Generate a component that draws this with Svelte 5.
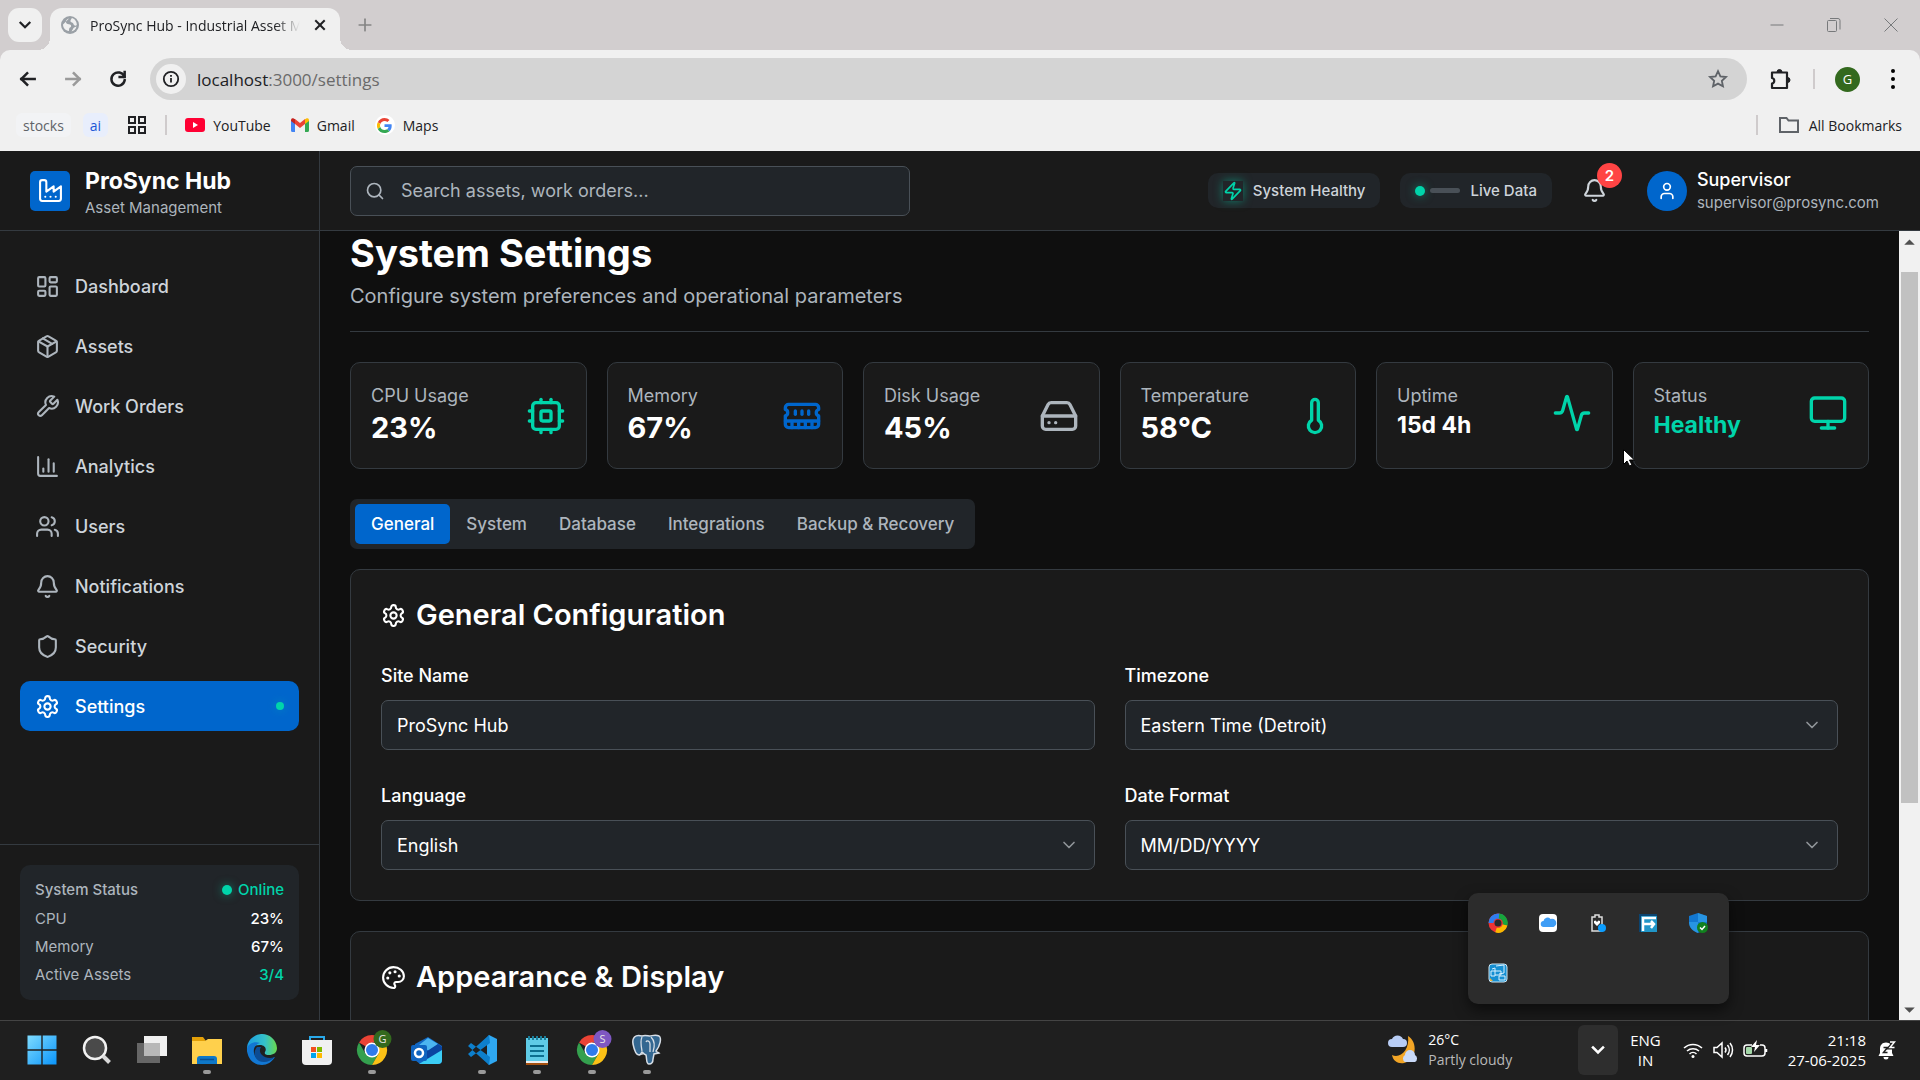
<script>
  const icons = {
    factory: ['M2 20a2 2 0 0 0 2 2h16a2 2 0 0 0 2-2V8l-7 5V8l-7 5V4a2 2 0 0 0-2-2H4a2 2 0 0 0-2 2Z', 'M17 18h.01', 'M12 18h.01', 'M7 18h.01'],
    dashboard: ['M4 3h5a1 1 0 0 1 1 1v7a1 1 0 0 1-1 1H4a1 1 0 0 1-1-1V4a1 1 0 0 1 1-1z', 'M15 3h5a1 1 0 0 1 1 1v3a1 1 0 0 1-1 1h-5a1 1 0 0 1-1-1V4a1 1 0 0 1 1-1z', 'M15 12h5a1 1 0 0 1 1 1v7a1 1 0 0 1-1 1h-5a1 1 0 0 1-1-1v-7a1 1 0 0 1 1-1z', 'M4 16h5a1 1 0 0 1 1 1v3a1 1 0 0 1-1 1H4a1 1 0 0 1-1-1v-3a1 1 0 0 1 1-1z'],
    package: ['M11 21.73a2 2 0 0 0 2 0l7-4A2 2 0 0 0 21 16V8a2 2 0 0 0-1-1.73l-7-4a2 2 0 0 0-2 0l-7 4A2 2 0 0 0 3 8v8a2 2 0 0 0 1 1.73z', 'M12 22V12', 'M3.3 7l8.7 5 8.7-5', 'm7.5 4.27 9 5.15'],
    wrench: ['M14.7 6.3a1 1 0 0 0 0 1.4l1.6 1.6a1 1 0 0 0 1.4 0l3.77-3.77a6 6 0 0 1-7.94 7.94l-6.91 6.91a2.12 2.12 0 0 1-3-3l6.91-6.91a6 6 0 0 1 7.94-7.94l-3.76 3.76z'],
    chart: ['M3 3v16a2 2 0 0 0 2 2h16', 'M18 17V9', 'M13 17V5', 'M8 17v-3'],
    users: ['M16 21v-2a4 4 0 0 0-4-4H6a4 4 0 0 0-4 4v2', 'M5 7a4 4 0 1 0 8 0a4 4 0 1 0-8 0', 'M22 21v-2a4 4 0 0 0-3-3.87', 'M16 3.13a4 4 0 0 1 0 7.75'],
    bell: ['M10.268 21a2 2 0 0 0 3.464 0', 'M3.262 15.326A1 1 0 0 0 4 17h16a1 1 0 0 0 .74-1.673C19.41 13.956 18 12.499 18 8A6 6 0 0 0 6 8c0 4.499-1.411 5.956-2.738 7.326'],
    shield: ['M20 13c0 5-3.5 7.5-7.66 8.95a1 1 0 0 1-.67-.01C7.5 20.5 4 18 4 13V6a1 1 0 0 1 1-1c2 0 4.5-1.2 6.24-2.72a1.17 1.17 0 0 1 1.52 0C14.51 3.81 17 5 19 5a1 1 0 0 1 1 1z'],
    settings: ['M12.22 2h-.44a2 2 0 0 0-2 2v.18a2 2 0 0 1-1 1.73l-.43.25a2 2 0 0 1-2 0l-.15-.08a2 2 0 0 0-2.73.73l-.22.38a2 2 0 0 0 .73 2.73l.15.1a2 2 0 0 1 1 1.72v.51a2 2 0 0 1-1 1.74l-.15.09a2 2 0 0 0-.73 2.73l.22.38a2 2 0 0 0 2.73.73l.15-.08a2 2 0 0 1 2 0l.43.25a2 2 0 0 1 1 1.73V20a2 2 0 0 0 2 2h.44a2 2 0 0 0 2-2v-.18a2 2 0 0 1 1-1.73l.43-.25a2 2 0 0 1 2 0l.15.08a2 2 0 0 0 2.73-.73l.22-.39a2 2 0 0 0-.73-2.73l-.15-.08a2 2 0 0 1-1-1.74v-.5a2 2 0 0 1 1-1.74l.15-.09a2 2 0 0 0 .73-2.73l-.22-.38a2 2 0 0 0-2.73-.73l-.15.08a2 2 0 0 1-2 0l-.43-.25a2 2 0 0 1-1-1.73V4a2 2 0 0 0-2-2z', 'M9 12a3 3 0 1 0 6 0a3 3 0 1 0-6 0'],
    cpu: ['M6 4h12a2 2 0 0 1 2 2v12a2 2 0 0 1-2 2H6a2 2 0 0 1-2-2V6a2 2 0 0 1 2-2z', 'M10 9h4a1 1 0 0 1 1 1v4a1 1 0 0 1-1 1h-4a1 1 0 0 1-1-1v-4a1 1 0 0 1 1-1z', 'M15 2v2', 'M15 20v2', 'M2 15h2', 'M2 9h2', 'M20 15h2', 'M20 9h2', 'M9 2v2', 'M9 20v2'],
    memory: ['M6 19v-3', 'M10 19v-3', 'M14 19v-3', 'M18 19v-3', 'M8 11V9', 'M16 11V9', 'M12 11V9', 'M2 15h20', 'M2 7a2 2 0 0 1 2-2h16a2 2 0 0 1 2 2v1.1a2 2 0 0 0 0 3.837V17a2 2 0 0 1-2 2H4a2 2 0 0 1-2-2v-5.1a2 2 0 0 0 0-3.837Z'],
    disk: ['M22 12H2', 'M5.45 5.11 2 12v6a2 2 0 0 0 2 2h16a2 2 0 0 0 2-2v-6l-3.45-6.89A2 2 0 0 0 16.76 4H7.24a2 2 0 0 0-1.79 1.11z', 'M6 16h.01', 'M10 16h.01'],
    thermometer: ['M14 4v10.54a4 4 0 1 1-4 0V4a2 2 0 0 1 4 0Z'],
    activity: ['M22 12h-2.48a2 2 0 0 0-1.93 1.46l-2.35 8.36a.25.25 0 0 1-.48 0L9.24 2.18a.25.25 0 0 0-.48 0l-2.35 8.36A2 2 0 0 1 4.49 12H2'],
    monitor: ['M4 3h16a2 2 0 0 1 2 2v10a2 2 0 0 1-2 2H4a2 2 0 0 1-2-2V5a2 2 0 0 1 2-2z', 'M8 21h8', 'M12 17v4'],
    palette: ['M13 6.5a.5.5 0 1 0 1 0a.5.5 0 1 0-1 0', 'M17 10.5a.5.5 0 1 0 1 0a.5.5 0 1 0-1 0', 'M8 7.5a.5.5 0 1 0 1 0a.5.5 0 1 0-1 0', 'M6 12.5a.5.5 0 1 0 1 0a.5.5 0 1 0-1 0', 'M12 2C6.5 2 2 6.5 2 12s4.5 10 10 10c.926 0 1.648-.746 1.648-1.688 0-.437-.18-.835-.437-1.125-.29-.289-.438-.652-.438-1.125a1.64 1.64 0 0 1 1.668-1.668h1.996c3.051 0 5.555-2.503 5.555-5.554C21.965 6.012 17.461 2 12 2z'],
    zap: ['M4 14a1 1 0 0 1-.78-1.63l9.9-10.2a.5.5 0 0 1 .86.46l-1.92 6.02A1 1 0 0 0 13 10h7a1 1 0 0 1 .78 1.63l-9.9 10.2a.5.5 0 0 1-.86-.46l1.92-6.02A1 1 0 0 0 11 14z'],
    user: ['M19 21v-2a4 4 0 0 0-4-4H9a4 4 0 0 0-4 4v2', 'M8 7a4 4 0 1 0 8 0a4 4 0 1 0-8 0'],
    search: ['M3 11a8 8 0 1 0 16 0a8 8 0 1 0-16 0', 'm21 21-4.3-4.3'],
    chevron: ['m6 9 6 6 6-6'],
    back: ['M20 12H4', 'm11 5-7 7 7 7'],
    forward: ['M4 12h16', 'm13 5 7 7-7 7'],
    plus: ['M5 12h14', 'M12 5v14'],
    cross: ['M6 6l12 12', 'M18 6 6 18'],
    reload: ['M19.5 9A8 8 0 1 0 20 13.5', 'M20 3.5V9.5h-6'],
    grid: ['M4 4h6v6H4z', 'M14 4h6v6h-6z', 'M4 14h6v6H4z', 'M14 14h6v6h-6z'],
    star: ['M12 3.5l2.6 5.6 6.1.7-4.5 4.2 1.2 6L12 17l-5.4 3 1.2-6-4.5-4.2 6.1-.7z'],
    folder: ['M3 5h6.5l2 2.5H21V19H3z']
  };

  const nav = [
    ['dashboard', 'Dashboard'],
    ['package', 'Assets'],
    ['wrench', 'Work Orders'],
    ['chart', 'Analytics'],
    ['users', 'Users'],
    ['bell', 'Notifications'],
    ['shield', 'Security'],
    ['settings', 'Settings']
  ];

  const metrics = [
    { label: 'CPU Usage', value: '23%', icon: 'cpu', tone: 'green' },
    { label: 'Memory', value: '67%', icon: 'memory', tone: 'blue' },
    { label: 'Disk Usage', value: '45%', icon: 'disk', tone: 'grey' },
    { label: 'Temperature', value: '58°C', icon: 'thermometer', tone: 'green' },
    { label: 'Uptime', value: '15d 4h', icon: 'activity', tone: 'green', small: true },
    { label: 'Status', value: 'Healthy', icon: 'monitor', tone: 'green', small: true, good: true }
  ];

  const tabs = ['General', 'System', 'Database', 'Integrations', 'Backup & Recovery'];
  let activeTab = $state('General');
  let siteName = $state('ProSync Hub');

  const fields = [
    { id: 'timezone', label: 'Timezone', value: 'Eastern Time (Detroit)' },
    { id: 'language', label: 'Language', value: 'English' },
    { id: 'date-format', label: 'Date Format', value: 'MM/DD/YYYY' }
  ];
</script>

{#snippet icon(name, cls)}
  <svg class="icon {cls}" viewBox="0 0 24 24" aria-hidden="true">
    {#each icons[name] as d}<path {d} />{/each}
  </svg>
{/snippet}

{#snippet chrome(letter, tone)}
  <svg viewBox="0 0 40 40" class="app-icon" aria-hidden="true">
    <path d="M20 20 7 12.5A15 15 0 0 1 33 12.5H20z" fill="#ea4335" />
    <path d="M20 20 13.5 23.75 7 12.5A15 15 0 0 0 20 35L26.5 23.75z" fill="#34a04e" />
    <path d="M33 12.5A15 15 0 0 1 20 35L26.5 23.75 26.5 12.5z" fill="#fbc116" />
    <circle cx="20" cy="20" r="7.5" fill="#fff" />
    <circle cx="20" cy="20" r="6" fill="#2f7bea" />
    <circle cx="30.5" cy="9" r="9" class={tone} />
    <text x="30.5" y="13" text-anchor="middle">{letter}</text>
  </svg>
{/snippet}

<div class="desktop">
  <div class="strip">
    <button class="tab-search" aria-label="Search tabs">{@render icon('chevron', 's18 bold')}</button>
    <div class="browser-tab">
      <svg class="favicon" viewBox="0 0 20 20" aria-hidden="true">
        <circle cx="10" cy="10" r="9" fill="#9aa0a6" />
        <path d="M9 3.5c-2 .5-3.500 2-3 4 .5 1.500 2.500 1.500 4 2 1.500.5 1.500 2.500 0 3-1 .5-1 2.500-1 3.500-3.500-.5-6-3-6-6.500M12 3c3 1 5 4 4.800 7-.8 1-2 1-2.800 0s-.5-2-2-2.500S9.500 6 12 3zM11.500 16.500c2.500-.5 4.500-2.500 5-5-2 .5-3 1-3.500 2.500z" fill="#f0f0f0" />
      </svg>
      <span class="tab-title">ProSync Hub - Industrial Asset M</span>
      <button class="bare" aria-label="Close tab">{@render icon('cross', 's16 bold')}</button>
    </div>
    <button class="bare new-tab" aria-label="New tab">{@render icon('plus', 's20 dim')}</button>
    <div class="window-buttons">
      <button class="bare" aria-label="Minimize"><svg viewBox="0 0 16 16"><path d="M1.5 8h13" /></svg></button>
      <button class="bare" aria-label="Restore"><svg viewBox="0 0 16 16"><path d="M2.5 3.500h7a1 1 0 0 1 1 1v9a1 1 0 0 1-1 1h-7a1 1 0 0 1-1-1v-9a1 1 0 0 1 1-1zM4 1.500h8a2 2 0 0 1 2 2v9" /></svg></button>
      <button class="bare" aria-label="Close"><svg viewBox="0 0 16 16"><path d="M1.5 1.5l13 13M14.5 1.5l-13 13" /></svg></button>
    </div>
  </div>

  <div class="toolbar">
    <button class="bare" aria-label="Back">{@render icon('back', 's20 bold')}</button>
    <button class="bare faded" aria-label="Forward">{@render icon('forward', 's20 bold')}</button>
    <button class="bare" aria-label="Reload">{@render icon('reload', 's20 bold')}</button>
    <div class="omnibox">
      <span class="site-info">
        <svg viewBox="0 0 20 20"><circle cx="10" cy="10" r="8" fill="none" stroke="#202124" stroke-width="2" /><path d="M10 9v5M10 5.5v2" stroke="#202124" stroke-width="2" /></svg>
      </span>
      <span class="url">localhost<i>:3000/settings</i></span>
      {@render icon('star', 's22 soft')}
    </div>
    <button class="bare extensions" aria-label="Extensions">
      <svg class="puzzle" viewBox="0 0 24 24"><path d="M4 5.5h15v15.500H4v-4.500c3-.5 3-5 0-5.500z" fill="none" stroke="#202124" stroke-width="2.200" stroke-linejoin="round" /><path d="M9 5a2.500 2.500 0 0 1 5 0zM19.500 10.500a2.500 2.500 0 0 1 0 5z" fill="#202124" stroke="#202124" /></svg>
    </button>
    <span class="rule"></span>
    <button class="profile" aria-label="Profile">G</button>
    <button class="bare" aria-label="Menu">
      <svg class="dots" viewBox="0 0 6 22"><circle cx="3" cy="3" r="2" /><circle cx="3" cy="11" r="2" /><circle cx="3" cy="19" r="2" /></svg>
    </button>
  </div>

  <div class="bookmarks">
    <a class="chip" href="#stocks">stocks</a>
    <a class="chip chip-blue" href="#ai">ai</a>
    {@render icon('grid', 's24 square')}
    <span class="rule"></span>
    <a href="#youtube">
      <svg class="yt" viewBox="0 0 20 14"><rect width="20" height="14" rx="3" fill="#f03" /><path d="M8 4l5 3-5 3z" fill="#fff" /></svg>YouTube
    </a>
    <a href="#gmail">
      <svg class="gm" viewBox="0 0 18 14"><path d="M0 2v10.5A1.5 1.5 0 0 0 1.5 14H4V5z" fill="#4285f4" /><path d="M18 2v10.5a1.5 1.5 0 0 1-1.5 1.5H14V5z" fill="#34a853" /><path d="M14 1v5l4-3V2a2 2 0 0 0-3.5-1z" fill="#fbbc04" /><path d="M4 1v5L0 3V2a2 2 0 0 1 3.5-1z" fill="#c5221f" /><path d="M4 1l5 4 5-4v5l-5 4-5-4z" fill="#ea4335" /></svg>Gmail
    </a>
    <a href="#maps">
      <span class="g-disc"><svg viewBox="0 0 48 48"><path fill="#ea4335" d="M24 9.500c3.500 0 6.700 1.200 9.200 3.600l6.900-6.900C35.900 2.400 30.500 0 24 0 14.600 0 6.500 5.400 2.600 13.200l8 6.200C12.400 13.700 17.700 9.500 24 9.500z" /><path fill="#4285f4" d="M47 24.500c0-1.600-.2-3.100-.4-4.500H24v9h12.900c-.6 3-2.200 5.500-4.800 7.200l7.700 6C44.400 38 47 31.800 47 24.500z" /><path fill="#fbbc05" d="M10.500 28.600a14.500 14.500 0 0 1 0-9.200l-8-6.200a24 24 0 0 0 0 21.600z" /><path fill="#34a853" d="M24 48c6.500 0 11.900-2.100 15.900-5.800l-7.700-6c-2.200 1.500-4.900 2.300-8.200 2.300-6.300 0-11.600-4.200-13.500-9.900l-8 6.200C6.500 42.600 14.600 48 24 48z" /></svg></span>Maps
    </a>
    <span class="rule push"></span>
    <a href="#all" class="all">{@render icon('folder', 's24 soft')}All Bookmarks</a>
  </div>

  <div class="app">
    <aside class="sidebar">
      <div class="brand">
        <span class="logo">{@render icon('factory', 's25')}</span>
        <div class="brand-text">
          <div class="brand-name">ProSync Hub</div>
          <div class="brand-sub">Asset Management</div>
        </div>
      </div>
      <nav>
        {#each nav as [name, label]}
          <a href="#{name}" class:current={name === 'settings'}>
            {@render icon(name, 's25')}<span>{label}</span>
            {#if name === 'settings'}<i class="pip"></i>{/if}
          </a>
        {/each}
      </nav>
      <div class="side-foot">
        <dl>
          <div class="first"><dt>System Status</dt><dd class="good"><i class="led"></i>Online</dd></div>
          <div><dt>CPU</dt><dd>23%</dd></div>
          <div><dt>Memory</dt><dd>67%</dd></div>
          <div><dt>Active Assets</dt><dd class="good">3/4</dd></div>
        </dl>
      </div>
    </aside>

    <div class="main">
      <header>
        <label class="search">
          {@render icon('search', 's20')}
          <input type="text" placeholder="Search assets, work orders..." aria-label="Search assets, work orders" />
        </label>
        <div class="pill"><span class="glow">{@render icon('zap', 's20')}</span>System Healthy</div>
        <div class="pill live"><i class="led"></i><i class="bar"></i><span>Live Data</span></div>
        <button class="alerts" aria-label="Notifications">{@render icon('bell', 's25')}<b>2</b></button>
        <div class="account">
          <span class="avatar">{@render icon('user', 's20')}</span>
          <div>
            <div class="who">Supervisor</div>
            <div class="mail">supervisor@prosync.com</div>
          </div>
        </div>
      </header>

      <div class="viewport">
        <main>
          <div class="title">
            <h1>System Settings</h1>
            <p>Configure system preferences and operational parameters</p>
          </div>

          <div class="metrics">
            {#each metrics as m}
              <section class="metric">
                <div class="metric-row">
                  <div>
                    <div class="metric-label">{m.label}</div>
                    <div class="metric-value" class:small={m.small} class:good={m.good}>{m.value}</div>
                  </div>
                  {@render icon(m.icon, `s40 ${m.tone}`)}
                </div>
              </section>
            {/each}
          </div>

          <div class="tabs" role="tablist">
            {#each tabs as tab}
              <button role="tab" aria-selected={tab === activeTab} class:active={tab === activeTab} onclick={() => (activeTab = tab)}>{tab}</button>
            {/each}
          </div>

          <section class="panel">
            <h2>{@render icon('settings', 's25')}General Configuration</h2>
            <div class="form">
              <div class="field">
                <label for="site-name">Site Name</label>
                <div class="control"><input id="site-name" type="text" bind:value={siteName} /></div>
              </div>
              {#each fields as f}
                <div class="field">
                  <label for={f.id}>{f.label}</label>
                  <div class="control">
                    <select id={f.id}><option>{f.value}</option></select>
                    {@render icon('chevron', 's20 caret')}
                  </div>
                </div>
              {/each}
            </div>
          </section>

          <section class="panel">
            <h2>{@render icon('palette', 's25')}Appearance &amp; Display</h2>
          </section>
        </main>
        <div class="scrollbar" aria-hidden="true">
          <svg viewBox="0 0 20 20"><path d="M5 13l5-5 5 5z" fill="#505050" /></svg>
          <div class="track"><div class="thumb"></div></div>
          <svg viewBox="0 0 20 20"><path d="M5 8l5 5 5-5z" fill="#505050" /></svg>
        </div>
      </div>
    </div>
  </div>

  <div class="taskbar">
    <div class="apps">
      <button class="bare" aria-label="Start"><svg class="app-icon" viewBox="0 0 40 40"><defs><linearGradient id="win" x1="0" y1="0" x2="1" y2="1"><stop offset="0" stop-color="#7fdcff" /><stop offset="1" stop-color="#0a94fa" /></linearGradient></defs><path d="M5.5 5.5H19.3V19.3H5.5zM20.7 5.5H34.5V19.3H20.7zM5.5 20.7H19.3V34.5H5.5zM20.7 20.7H34.5V34.5H20.7z" fill="url(#win)" /></svg></button>
      <button class="bare" aria-label="Search"><svg class="app-icon" viewBox="0 0 40 40"><circle cx="18" cy="18" r="11" fill="#4a4a4a" stroke="#f2f2f2" stroke-width="2.500" /><path d="M26 26l6.5 6.5" stroke="#d8d8d8" stroke-width="4" /></svg></button>
      <button class="bare" aria-label="Task view"><svg class="app-icon" viewBox="0 0 40 40"><rect x="5" y="13" width="23" height="20" fill="#666" /><rect x="12" y="6" width="23" height="20" fill="#f0f0f0" /><rect x="12" y="13" width="16" height="13" fill="#b8b8b8" /></svg></button>
      <button class="bare open" aria-label="File Explorer"><svg class="app-icon" viewBox="0 0 40 40"><path d="M5 7h11l3 4v6H5z" fill="#e3a008" /><path d="M5 11h13l3-2h14v25H5z" fill="#ffd04c" /><path d="M10 34v-5a3 3 0 0 1 3-3h14a3 3 0 0 1 3 3v5z" fill="#0f78c8" /><path d="M13 29.5h14" stroke="#0a4f91" stroke-width="1.500" /></svg></button>
      <button class="bare" aria-label="Edge"><svg class="app-icon" viewBox="0 0 40 40"><defs><linearGradient id="edge" x1="0" y1="0" x2="1" y2="0"><stop offset="0" stop-color="#1b9de2" /><stop offset=".6" stop-color="#35c1c8" /><stop offset="1" stop-color="#6ad84c" /></linearGradient></defs><path d="M5 20A15 15 0 0 1 35 18c0 5-4 7-8 7-3 0-5-1-4-3 2-3 0-7-5-7-6 0-12 3-13 8z" fill="url(#edge)" /><path d="M5 19c1-6 8-8 13-6-4 1-7 5-6 10 1 6 8 10 14 7l7-3c-3 5-8 8-13 8C11 35 5 28 5 19z" fill="#1277d3" /><path d="M15 17c-4 5-3 11 2 14 5 2 11 1 16-4-5 2-10 1-13-2-2-2-3-5-1-8z" fill="#0c4c94" /></svg></button>
      <button class="bare" aria-label="Store"><svg class="app-icon" viewBox="0 0 40 40"><path d="M13 12V7h14v5" fill="none" stroke="#29a9ea" stroke-width="2" /><path d="M5 10h30v21a4 4 0 0 1-4 4H9a4 4 0 0 1-4-4z" fill="#f1f1f1" /><path d="M14 17h5v5h-5z" fill="#f25022" /><path d="M20 17h5v5h-5z" fill="#7fba00" /><path d="M14 23h5v5h-5z" fill="#00a4ef" /><path d="M20 23h5v5h-5z" fill="#ffb900" /></svg></button>
      <button class="bare open" aria-label="Chrome, profile G">{@render chrome('G', 'tone-g')}</button>
      <button class="bare" aria-label="Outlook"><svg class="app-icon" viewBox="0 0 40 40"><path d="M8 14 21 7l14 9v14a4 4 0 0 1-4 4H13l-5-4z" fill="#1268c4" /><path d="M12 15 21 8l10 6-9 7z" fill="#4cb5f0" /><path d="M17 23l14-9 4 3v5L22 31z" fill="#0b45a0" /><path d="M12 34l23-14v10a4 4 0 0 1-4 4z" fill="#3ccdf5" /><rect x="4" y="15" width="16" height="16" rx="2" fill="#0f64c0" /><circle cx="12" cy="23" r="4" fill="none" stroke="#fff" stroke-width="2.500" /></svg></button>
      <button class="bare open" aria-label="VS Code"><svg class="app-icon" viewBox="0 0 40 40"><path d="M27 5l8 4v22l-8 4-2-3V8z" fill="#2fa8f2" /><path d="M27 5 6 24l3 3 19-14zM6 16l3-3 19 14-1 8z" fill="#0d7fcc" /></svg></button>
      <button class="bare open" aria-label="Notepad"><svg class="app-icon" viewBox="0 0 40 40"><rect x="9" y="8" width="22" height="25" fill="#5fcbe6" /><rect x="9" y="31" width="22" height="2" fill="#eee" /><rect x="9" y="33" width="22" height="2" fill="#a5500f" /><path d="M13 16h14M13 21h14M13 26h14" stroke="#0c6f8f" stroke-width="2" /><path d="M12 6v4M16 6v4M20 6v4M24 6v4M28 6v4" stroke="#1a7f9c" stroke-width="2" /></svg></button>
      <button class="bare open" aria-label="Chrome, profile S">{@render chrome('S', 'tone-s')}</button>
      <button class="bare open" aria-label="pgAdmin"><svg class="app-icon" viewBox="0 0 40 40"><path d="M15 6C8 4 5 8 6 14c1 5 3 11 6 11 2 0 2-2 3-3l2 2 2 1c1 4 0 9 3 9s4-2 4-5l1-5 5-1c-1-1-3-1-3-2 4-5 6-13 3-15-4-2-7 0-9 0s-5-1-8 0z" fill="#336791" stroke="#d7dee6" stroke-width="1.500" /><path d="M15 7c-2 4-1 9 0 14M24 7c4 4 4 9 2 15M17 23c-2 2-4 1-5 2M19 12c1-2 4-1 4 2v8" fill="none" stroke="#d7dee6" stroke-width="1.300" /></svg></button>
    </div>
    <div class="weather">
      <svg viewBox="0 0 32 32"><path d="M20 2c10 6 9 24-4 27-6 1-11-2-12-8 8 4 18-5 16-19z" fill="#f2a526" /><path d="M4 13a4 4 0 0 1 0-8 6 6 0 0 1 11 0 4 4 0 0 1 0 8z" fill="#b8cdf5" /><path d="M17 28a4 4 0 0 1 0-7 5 5 0 0 1 10 0 4 4 0 0 1 0 7z" fill="#c9d9f8" /></svg>
      <div><div>26°C</div><div class="sky">Partly cloudy</div></div>
    </div>
    <button class="overflow" aria-label="Hidden icons">{@render icon('chevron', 's20 bold')}</button>
    <div class="lang"><div>ENG</div><div>IN</div></div>
    <div class="system">
      <svg viewBox="0 0 22 20"><path d="M2 8a13 13 0 0 1 18 0M5 11a9 9 0 0 1 12 0M7.5 14a5 5 0 0 1 7 0" /><circle cx="11" cy="16.500" r="1.500" fill="#fff" stroke="none" /></svg>
      <svg viewBox="0 0 22 20"><path d="M2 7.5h3l5-4.500v14l-5-4.500H2zM13 7.5a4 4 0 0 1 0 5M15.5 5a8 8 0 0 1 0 10M18 3a11 11 0 0 1 0 14" /></svg>
      <svg class="battery" viewBox="0 0 26 20"><path d="M10 5H5a3 3 0 0 0-3 3v5a3 3 0 0 0 3 3h15a3 3 0 0 0 3-3V8a3 3 0 0 0-3-3h-2M24.500 9v3" /><rect x="4" y="7" width="6" height="7" rx="1" fill="#a4d8a8" stroke="none" /><path d="M15 0l-6 7h4l-1 5 6-7h-4z" fill="#fff" stroke="none" /></svg>
    </div>
    <div class="clock"><div>21:18</div><div>27-06-2025</div></div>
    <svg class="snooze" viewBox="0 0 18 20"><path d="M8 2.500c-4 0-6 3-6 6V13L.5 16h15L14 13V8.500c0-3-2-6-6-6zM5.5 17a2.500 2.500 0 0 0 5 0z" fill="#fff" /><path d="M5.5 7.500h4l-4 5h4" fill="none" stroke="#1f1f1f" stroke-width="1.500" /><path d="M12 2h4.500L12 7.500h4.500" fill="none" stroke="#1f1f1f" stroke-width="4" /><path d="M12 2h4.500L12 7.500h4.500" fill="none" stroke="#fff" stroke-width="1.500" /></svg>
  </div>

  <div class="tray">
    <svg viewBox="0 0 20 20"><circle cx="10" cy="10" r="6.500" fill="none" stroke="#e33" stroke-width="6" /><path d="M3 10a7 7 0 0 1 7-7l4 1" fill="none" stroke="#2f7df0" stroke-width="5" /><path d="M11 3a7 7 0 0 1 6 9" fill="none" stroke="#17a53c" stroke-width="5" /><path d="M17 12a7 7 0 0 1-9 5" fill="none" stroke="#fbb800" stroke-width="5" /></svg>
    <svg viewBox="0 0 20 20"><rect x="1" y="1" width="18" height="18" rx="4" fill="#fff" /><path d="M6 14a3 3 0 0 1-.5-6 4 4 0 0 1 7-2 4 4 0 0 1 3 8z" fill="#3f9df5" /></svg>
    <svg viewBox="0 0 20 20"><path d="M4 4h3V2h4v2h3v14H4z" fill="none" stroke="#ddd" stroke-width="1.500" /><path d="M9 13 6 10V8l1.500-.5L9 9l1.500-1.500L12 8v2z" fill="#fff" /><circle cx="14" cy="15" r="4" fill="#0a9dff" /></svg>
    <svg viewBox="0 0 20 20"><rect x="1" y="1" width="18" height="18" fill="#0b4470" /><rect x="3" y="3" width="16" height="16" fill="#2196c8" /><path d="M5 18V5h13M5 11h11M13 8l3 3-3 4" fill="none" stroke="#fff" stroke-width="2.500" /></svg>
    <svg viewBox="0 0 20 20"><path d="M10 0l9 3v6c0 6-4 9-9 11C5 18 1 15 1 9V3z" fill="#1277d0" /><path d="M10 0l9 3v6h-9zM1 9h9v11C5 18 1 15 1 9z" fill="#36a9ef" opacity=".6" /><circle cx="14.500" cy="14.500" r="5.500" fill="#11811e" /><path d="M12 14.5l2 2 3-3.500" fill="none" stroke="#fff" stroke-width="1.500" /></svg>
    <svg viewBox="0 0 20 20"><rect x="1" y="1" width="18" height="18" rx="3" fill="#158fd2" stroke="#cfe6f2" /><path d="M4 6l3-1v8H3V8h10v4H7M8 3l8-1v8l-5 1M11 13h6v4h-6z" fill="none" stroke="#d8f1ff" /><path d="M2 15l3 3H2z" fill="#e9b23a" /></svg>
  </div>

  <svg class="cursor" viewBox="0 0 12 18" aria-hidden="true"><path d="M.5.5v15L4 12l2.500 5L9 16l-2.500-5h5z" fill="#fff" stroke="#000" /></svg>
</div>

<style>
  :global(body) { margin: 0; background: #0f0f0f; }
  .desktop {
    position: relative;
    display: flex;
    flex-direction: column;
    height: 100vh;
    overflow: hidden;
    background: #d2cecf;
    font-family: Inter, "Liberation Sans", sans-serif;
    color: #fff;
  }
  .desktop * { box-sizing: border-box; }
  button, input, select { font: inherit; color: inherit; }
  a { color: inherit; text-decoration: none; }
  svg { display: block; flex: none; }
  .bare { display: grid; place-items: center; padding: 0; border: 0; background: none; }

  .icon { fill: none; stroke: currentColor; stroke-width: 2; stroke-linecap: round; stroke-linejoin: round; }
  .s16 { width: 16px; height: 16px; }
  .s18 { width: 18px; height: 18px; }
  .s20 { width: 20px; height: 20px; }
  .s22 { width: 22px; height: 22px; }
  .s24 { width: 24px; height: 24px; }
  .s25 { width: 25px; height: 25px; }
  .s40 { width: 40px; height: 40px; }
  .bold { stroke-width: 3; stroke-linecap: square; stroke-linejoin: miter; }
  .square { stroke-linejoin: miter; }
  .soft { color: #5f6368; stroke-linejoin: miter; }
  .dim { color: #858585; }
  .green { color: #00d4aa; }
  .blue { color: #0066cc; }
  .grey { color: #adb5bd; }
  .good { color: #00d4aa; }

  /* Browser window */
  .strip, .toolbar, .bookmarks { flex: none; display: flex; align-items: center; font-family: "Open Sans", "Noto Sans", sans-serif; color: #202124; }
  .strip { height: 50px; padding: 0 21px 0 8px; font-size: 14px; }
  .tab-search { display: grid; place-items: center; width: 34px; height: 34px; border: 0; padding: 0; border-radius: 11px; background: #f0f0f0; }
  .browser-tab { position: relative; display: flex; align-items: center; align-self: flex-end; width: 290px; height: 42px; margin-left: 8px; padding: 0 12px 8px 10px; border-radius: 12px 12px 0 0; background: #f0f0f0; }
  .browser-tab::before, .browser-tab::after { content: ""; position: absolute; bottom: 0; width: 12px; height: 12px; }
  .browser-tab::before { right: 100%; background: radial-gradient(circle at 0 0, transparent 12px, #f0f0f0 12px); }
  .browser-tab::after { left: 100%; background: radial-gradient(circle at 100% 0, transparent 12px, #f0f0f0 12px); }
  .favicon { width: 20px; height: 20px; margin-right: 10px; }
  .tab-title { flex: 1; overflow: hidden; margin-right: 12px; white-space: nowrap; mask-image: linear-gradient(90deg, #000 88%, transparent); }
  .new-tab { margin-left: 15px; }
  .window-buttons { display: flex; gap: 41px; margin-left: auto; }
  .window-buttons svg { width: 16px; height: 16px; fill: none; stroke: #77797b; }
  .toolbar { height: 58px; padding: 0 24px 0 18px; border-radius: 10px 10px 0 0; background: #f0f0f0; }
  .toolbar > button { margin-right: 25px; }
  .faded { color: #9a9a9a; }
  .omnibox { flex: 1; display: flex; align-items: center; height: 42px; margin: 0 21px 0 -3px; padding: 0 18px 0 6px; border-radius: 21px; background: #d4d4d4; font-size: 17px; }
  .site-info { display: grid; place-items: center; width: 30px; height: 30px; margin-right: 11px; border-radius: 50%; background: #f0f0f0; }
  .site-info svg { width: 18px; height: 18px; }
  .url { flex: 1; }
  .url i { font-style: normal; color: #6a6a6a; }
  .puzzle { width: 24px; height: 24px; }
  .toolbar > .extensions { margin-right: 21px; }
  .rule { width: 2px; height: 20px; background: #cfcbcc; }
  .toolbar .profile { width: 25px; height: 25px; margin: 0 30px 0 20px; padding: 0; border: 0; border-radius: 50%; background: #33691e; color: #fff; font-size: 13px; }
  .toolbar > button:last-child { margin-right: 0; }
  .dots { width: 6px; height: 22px; }
  .bookmarks { height: 43px; padding: 0 18px 9px 16px; background: #f0f0f0; font-size: 14px; }
  .bookmarks a { display: flex; align-items: center; gap: 8px; margin-right: 20px; }
  .bookmarks .chip { height: 24px; margin-right: 12px; padding: 0 7px; border-radius: 6px; background: #f2f3f5; color: #5f6368; }
  .bookmarks .chip-blue { margin-right: 17px; background: #e8eefc; color: #1a56d6; }
  .bookmarks .rule { margin: 0 18px 0 16px; }
  .bookmarks .push { margin-left: auto; margin-right: 19px; }
  .bookmarks .all { margin-right: 0; }
  .yt { width: 20px; height: 14px; }
  .gm { width: 18px; height: 14px; }
  .g-disc { display: grid; place-items: center; width: 20px; height: 20px; border-radius: 50%; background: #fff; }
  .g-disc svg { width: 15px; height: 15px; }

  /* Application */
  .app { flex: 1; min-height: 0; display: flex; background: #0f0f0f; }
  .sidebar { flex: none; width: 320px; display: flex; flex-direction: column; border-right: 1px solid #343a40; background: #1a1a1a; }
  .brand { display: flex; align-items: center; gap: 15px; height: 80px; padding: 0 30px; border-bottom: 1px solid #343a40; }
  .logo { display: grid; place-items: center; width: 40px; height: 40px; border-radius: 5px; background: #0066cc; }
  .brand-text { padding-top: 4px; }
  .brand-name { font-size: 23px; line-height: 30px; font-weight: 700; white-space: nowrap; }
  .brand-sub { font-size: 15px; line-height: 24px; color: #adb5bd; }
  nav { flex: 1; display: flex; flex-direction: column; gap: 10px; padding: 30px 20px; }
  nav a { display: flex; align-items: center; gap: 15px; height: 50px; padding: 0 15px; border-radius: 10px; font-size: 18px; font-weight: 500; color: #ced4da; }
  nav .icon { color: #adb5bd; }
  nav .current, nav .current .icon { color: #fff; }
  nav .current { background: #0066cc; }
  .pip { width: 8px; height: 8px; margin-left: auto; border-radius: 50%; background: #00d4aa; box-shadow: 0 0 10px #00d4aa55; }
  .side-foot { padding: 20px; border-top: 1px solid #343a40; }
  dl { display: flex; flex-direction: column; gap: 8px; margin: 0; padding: 15px; border-radius: 10px; background: #212529; font-size: 15px; line-height: 20px; color: #adb5bd; }
  dl div { display: flex; justify-content: space-between; }
  dl .first { margin-bottom: 1px; font-weight: 500; }
  dd { display: flex; align-items: center; gap: 6px; margin: 0; font-weight: 500; color: #fff; }
  dd.good { color: #00d4aa; }
  .led { width: 10px; height: 10px; border-radius: 50%; background: #00d4aa; box-shadow: 0 0 10px #00d4aa80; }

  .main { flex: 1; min-width: 0; display: flex; flex-direction: column; }
  header { flex: none; display: flex; align-items: center; height: 80px; padding: 0 41px 0 30px; border-bottom: 1px solid #343a40; background: #1a1a1a; }
  .search { display: flex; align-items: center; gap: 16px; flex: 0 1 560px; height: 50px; margin-right: auto; padding: 0 14px; border: 1px solid #495057; border-radius: 7px; background: #212529; color: #adb5bd; }
  .search input { flex: 1; min-width: 0; padding: 0; border: 0; outline: 0; background: none; font-size: 18px; }
  .search input::placeholder { color: #adb5bd; opacity: 1; }
  .pill { display: flex; align-items: center; gap: 10px; height: 35px; margin-left: 20px; padding: 0 15px; border-radius: 10px; background: #212529; font-size: 15px; font-weight: 500; color: #ced4da; white-space: nowrap; }
  .glow { color: #00d4aa; box-shadow: 0 0 10px #00d4aa80; background: #212529; }
  .bar { width: 30px; height: 5px; margin-left: -5px; border-radius: 3px; background: #495057; }
  .alerts { position: relative; display: grid; place-items: center; width: 45px; height: 45px; margin: 0 30px 0 20px; padding: 0; border: 0; background: none; color: #ced4da; }
  .alerts b { position: absolute; top: -5px; right: -5px; width: 25px; height: 25px; border-radius: 50%; background: #ff4444; color: #fff; font-size: 15px; line-height: 25px; font-weight: 600; text-align: center; }
  .account { display: flex; align-items: center; gap: 10px; }
  .avatar { display: grid; place-items: center; width: 40px; height: 40px; border-radius: 50%; background: #0066cc; }
  .who { font-size: 18px; line-height: 24px; font-weight: 500; }
  .mail { font-size: 15px; line-height: 21px; color: #adb5bd; }

  .viewport { flex: 1; min-height: 0; display: flex; }
  main { flex: 1; min-width: 0; overflow: hidden; padding: 0 30px; }
  .title { padding-bottom: 19px; margin-bottom: 30px; border-bottom: 1px solid #343a40; }
  h1 { margin: 0 0 5px; font-size: 38px; line-height: 44px; font-weight: 700; }
  p { margin: 0; font-size: 20px; line-height: 32px; color: #adb5bd; }
  .metrics { display: grid; grid-template-columns: repeat(6, 1fr); gap: 20px; margin-bottom: 30px; }
  .metric { padding: 20px; border: 1px solid #343a40; border-radius: 10px; background: #1a1a1a; }
  .metric-row { display: flex; align-items: center; justify-content: space-between; }
  .metric-label { font-size: 18px; line-height: 25px; color: #adb5bd; }
  .metric-value { font-size: 29px; line-height: 40px; font-weight: 700; }
  .metric-value.small { font-size: 23px; line-height: 35px; }
  .metric-value.good { color: #00d4aa; }
  .tabs { display: inline-flex; height: 50px; padding: 5px; margin-bottom: 20px; border-radius: 7px; background: #212529; vertical-align: top; }
  .tabs button { padding: 0 16px; border: 0; border-radius: 5px; background: none; font-size: 17px; font-weight: 500; color: #adb5bd; }
  .tabs .active { background: #0066cc; color: #fff; }
  .panel { margin-bottom: 30px; padding: 30px; border: 1px solid #343a40; border-radius: 10px; background: #1a1a1a; }
  h2 { display: flex; align-items: center; gap: 10px; margin: 0 0 32px; font-size: 29px; line-height: 30px; font-weight: 600; }
  .form { display: grid; grid-template-columns: 1fr 1fr; gap: 32px 30px; }
  .field { display: flex; flex-direction: column; gap: 10px; }
  .field label { font-size: 18px; line-height: 28px; font-weight: 500; }
  .control { position: relative; }
  .control input, .control select { display: block; width: 100%; height: 50px; padding: 0 15px; border: 1px solid #495057; border-radius: 7px; background: #212529; font-size: 18px; appearance: none; outline: 0; }
  .control .caret { position: absolute; top: 15px; right: 16px; color: #909498; pointer-events: none; }
  .scrollbar { flex: none; display: flex; flex-direction: column; width: 21px; background: #f1f1f1; }
  .scrollbar svg { width: 21px; height: 21px; }
  .track { flex: 1; padding: 20px 2px 0; }
  .thumb { height: 73%; background: #c1c1c1; }

  /* Taskbar */
  .taskbar { flex: none; display: flex; align-items: center; height: 60px; padding: 0 24px 2px 14px; border-top: 1px solid #444; background: #1f1f1f; font-family: "Open Sans", "Noto Sans", sans-serif; font-size: 14px; line-height: 20px; }
  .apps { display: flex; }
  .apps button { position: relative; width: 55px; height: 57px; }
  .apps .open::after { content: ""; position: absolute; bottom: 4px; left: 24px; width: 8px; height: 4px; border-radius: 2px; background: #9a9a9a; }
  .app-icon { width: 40px; height: 40px; overflow: visible; }
  .app-icon text { font-size: 11px; fill: #e6e6e6; }
  .tone-g { fill: #33691e; }
  .tone-s { fill: #7e57c2; }
  .weather { display: flex; align-items: center; gap: 8px; margin-left: auto; margin-right: 66px; }
  .weather svg { width: 32px; height: 32px; }
  .sky { color: #b8b8b8; }
  .overflow { display: grid; place-items: center; width: 40px; height: 50px; margin-right: 12px; padding: 0; border: 0; border-radius: 6px; background: #2e2e2e; }
  .lang { text-align: center; margin-right: 21px; font-size: 15px; }
  .system { display: flex; gap: 8px; margin-right: 20px; }
  .system svg { width: 22px; height: 20px; fill: none; stroke: #fff; stroke-width: 1.5; }
  .system .battery { width: 26px; }
  .clock { text-align: right; margin-right: 12px; font-size: 15px; }
  .snooze { width: 18px; height: 20px; }

  .tray { position: absolute; right: 191px; bottom: 76px; display: grid; grid-template-columns: repeat(5, 20px); gap: 30px; width: 261px; height: 111px; padding: 20px; border-radius: 10px; background: #2c2c2c; box-shadow: 0 6px 14px #0008; align-content: start; }
  .tray svg { width: 20px; height: 20px; }
  .cursor { position: absolute; left: 1623px; top: 449px; width: 12px; height: 18px; }
</style>
